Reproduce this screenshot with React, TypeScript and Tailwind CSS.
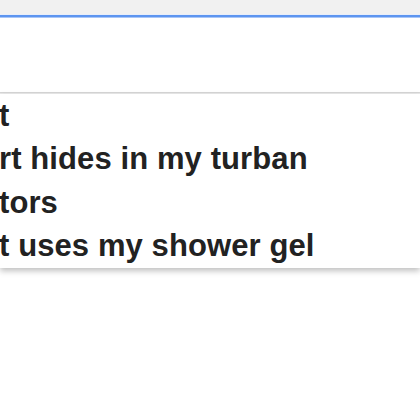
export default function App() {
  const rows = ["t", "rt hides in my turban", "tors", "t uses my shower gel"];
  return (
    <div className="w-[420px] h-[420px] bg-white overflow-hidden relative" style={{ fontFamily: '"Liberation Sans", Arial, sans-serif' }}>
      <div className="h-[14px] bg-[#f1f1f1]" />
      <div className="h-[1px] bg-[#e8eefa]" />
      <div className="h-[2px] bg-[#5d95f0]" />
      <div className="h-[1px] bg-[#a9c6f7]" />
      <div className="h-[74px] bg-white" />
      <div className="border-t border-[#d6d6d6] border-b-2 border-b-[#ebebeb] h-[3px]" />
      <div className="bg-white shadow-[0_3px_6px_rgba(0,0,0,0.25)] -mt-[1px] pb-[1px]">
        {rows.map((r, i) => (
          <div key={i} className="h-[43.3px] leading-[43.3px] text-[31px] font-bold text-[#222] whitespace-nowrap -ml-[1px] tracking-[0.1px]">
            {r}
          </div>
        ))}
      </div>
    </div>
  );
}
